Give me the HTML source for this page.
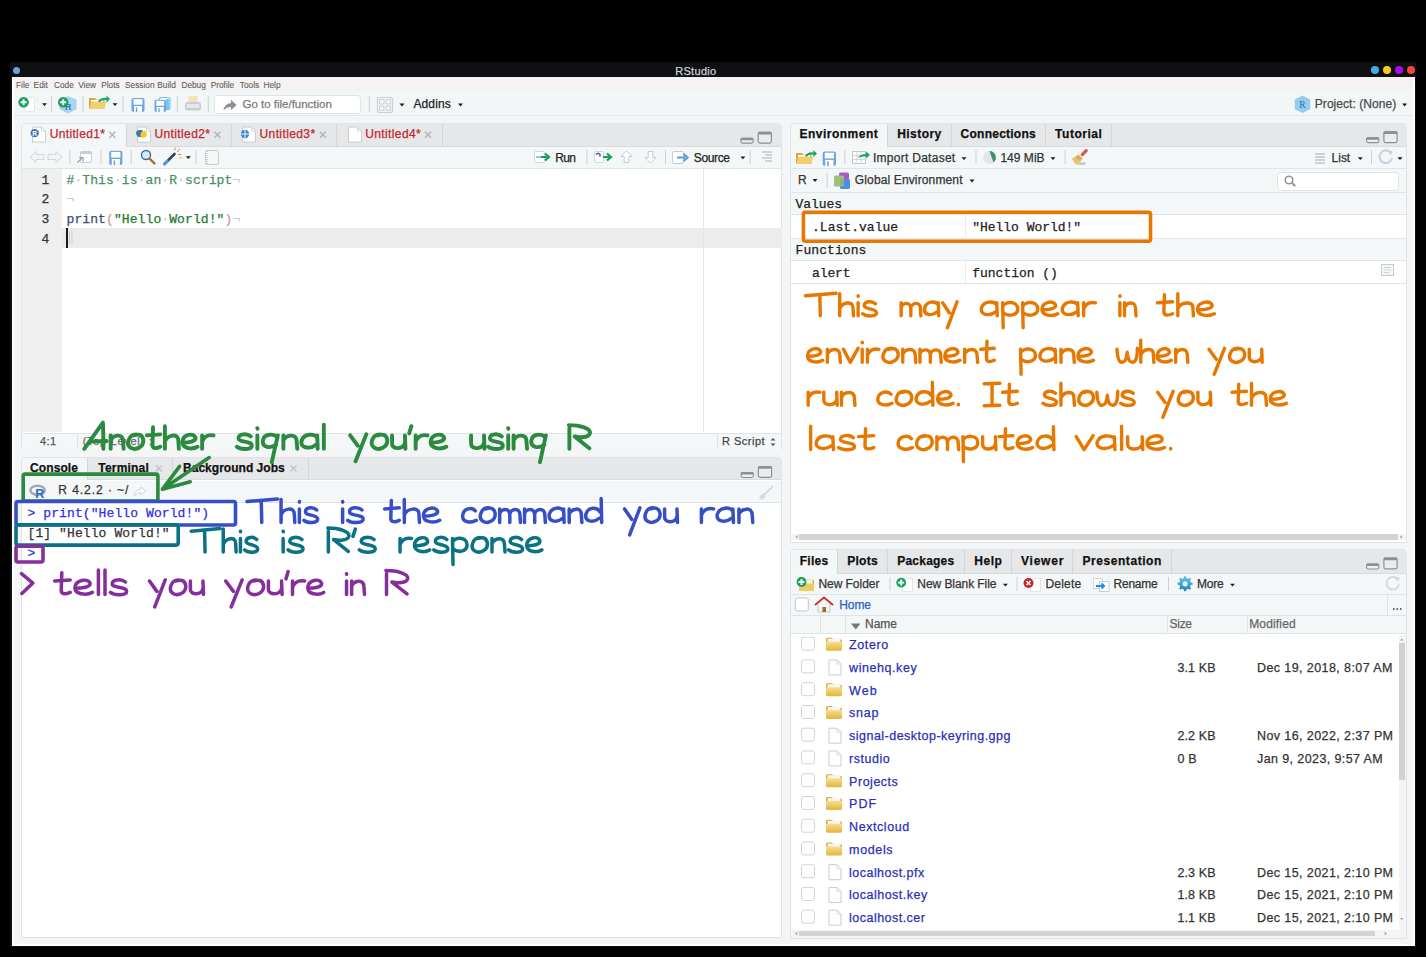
<!DOCTYPE html>
<html><head><meta charset="utf-8">
<style>
*{margin:0;padding:0;box-sizing:border-box}
html,body{width:1426px;height:957px;overflow:hidden;background:#000}
body{position:relative;font-family:"Liberation Sans",sans-serif;font-size:12px;color:#333}
.a{position:absolute}
.t{position:absolute;white-space:nowrap;-webkit-text-stroke:0.25px currentColor}
svg{position:absolute;overflow:visible}
</style></head><body>
<div class="a" style="left:10px;top:62px;width:1406px;height:885px;background:#0e1014;"></div><div class="a" style="left:12px;top:77px;width:1403px;height:869px;background:#ffffff;"></div><div class="a" style="left:14px;top:77px;width:1399px;height:867px;background:#f3f5f7;"></div><div class="a" style="left:14px;top:77px;width:1399px;height:14px;background:#f5f3f1;"></div><div class="a" style="left:14px;top:91px;width:1399px;height:25px;background:#f3f6f7;border-bottom:1px solid #e6e9eb;"></div><div class="a" style="left:13.0px;top:66.7px;width:7.0px;height:7.0px;border-radius:50%;background:#6aa3d8"></div><div class="a" style="left:1371.2px;top:66.2px;width:8px;height:8px;border-radius:50%;background:#49a9e6"></div><div class="a" style="left:1383px;top:66.2px;width:8px;height:8px;border-radius:50%;background:#f7cc12"></div><div class="a" style="left:1395.2px;top:66.2px;width:8px;height:8px;border-radius:50%;background:#a80ce8"></div><div class="a" style="left:1406.9px;top:66.2px;width:8px;height:8px;border-radius:50%;background:#f5413f"></div><div class="a" style="left:20.7px;top:122.5px;width:761.3px;height:327.5px;background:#fff;border:1px solid #e1e4e7;border-radius:4px 4px 0 0;"></div><div class="a" style="left:21.7px;top:123.5px;width:759.3px;height:23px;background:#e6e7e9;border-radius:3px 3px 0 0;border-bottom:1px solid #d9dcdf"></div><div class="a" style="left:21.7px;top:123.5px;width:104.3px;height:24px;background:#f4f7f8;border-radius:3px 0 0 0;"></div><div class="a" style="left:126px;top:123.5px;width:1px;height:23px;background:#d4d6d9"></div><div class="a" style="left:231px;top:123.5px;width:1px;height:23px;background:#d4d6d9"></div><div class="a" style="left:336px;top:123.5px;width:1px;height:23px;background:#d4d6d9"></div><div class="a" style="left:442px;top:123.5px;width:1px;height:23px;background:#d4d6d9"></div><div class="a" style="left:21.7px;top:146.5px;width:759.3px;height:22.2px;background:#f4f7f8;border-bottom:1px solid #e1e4e7"></div><div class="a" style="left:21.7px;top:168.7px;width:40.3px;height:263.3px;background:#efefef;"></div><div class="a" style="left:62px;top:228.3px;width:719.5px;height:19.6px;background:#ececec;"></div><div class="a" style="left:702.8px;top:168.7px;width:1px;height:263.3px;background:#e6e6e6;"></div><div class="a" style="left:21.7px;top:432.5px;width:759.3px;height:17px;background:#f4f7f8;border-top:1px solid #e1e4e7"></div><div class="a" style="left:76.5px;top:433px;width:1px;height:16px;background:#dfe2e5;"></div><div class="a" style="left:716.5px;top:433px;width:1px;height:16px;background:#dfe2e5;"></div><div class="a" style="left:66.3px;top:228.3px;width:2px;height:19.6px;background:#1a1a1a;"></div><div class="a" style="left:20.7px;top:456.8px;width:761.3px;height:481.7px;background:#fff;border:1px solid #e1e4e7;border-radius:4px 4px 0 0;"></div><div class="a" style="left:21.7px;top:457.8px;width:759.3px;height:22.7px;background:#e6e7e9;border-radius:3px 3px 0 0;border-bottom:1px solid #d9dcdf"></div><div class="a" style="left:21.7px;top:457.8px;width:65.6px;height:23.7px;background:#f4f7f8;border-radius:3px 0 0 0;"></div><div class="a" style="left:87.3px;top:457.8px;width:1px;height:22.7px;background:#d4d6d9"></div><div class="a" style="left:172px;top:457.8px;width:1px;height:22.7px;background:#d4d6d9"></div><div class="a" style="left:307.8px;top:457.8px;width:1px;height:22.7px;background:#d4d6d9"></div><div class="a" style="left:21.7px;top:480.5px;width:759.3px;height:22.1px;background:#f4f7f8;border-bottom:1px solid #e1e4e7"></div><div class="a" style="left:790px;top:122.5px;width:617px;height:420.5px;background:#fff;border:1px solid #e1e4e7;border-radius:4px 4px 0 0;"></div><div class="a" style="left:791px;top:123.5px;width:615px;height:23px;background:#e6e7e9;border-radius:3px 3px 0 0;border-bottom:1px solid #d9dcdf"></div><div class="a" style="left:791px;top:123.5px;width:96px;height:24px;background:#f4f7f8;border-radius:3px 0 0 0;"></div><div class="a" style="left:887px;top:123.5px;width:1px;height:23px;background:#d4d6d9"></div><div class="a" style="left:951px;top:123.5px;width:1px;height:23px;background:#d4d6d9"></div><div class="a" style="left:1044.6px;top:123.5px;width:1px;height:23px;background:#d4d6d9"></div><div class="a" style="left:1111px;top:123.5px;width:1px;height:23px;background:#d4d6d9"></div><div class="a" style="left:791px;top:146.5px;width:615px;height:22.7px;background:#f4f7f8;border-bottom:1px solid #e1e4e7"></div><div class="a" style="left:791px;top:169.2px;width:615px;height:23.8px;background:#f4f7f8;border-bottom:1px solid #e1e4e7"></div><div class="a" style="left:791px;top:193px;width:615px;height:22.1px;background:#f4f7f8;border-bottom:1px solid #e1e4e7"></div><div class="a" style="left:791px;top:215.1px;width:615px;height:23.5px;background:#fff;border-bottom:1px solid #e6e8eb"></div><div class="a" style="left:791px;top:238.6px;width:615px;height:22.3px;background:#f4f7f8;border-bottom:1px solid #e1e4e7"></div><div class="a" style="left:791px;top:260.9px;width:615px;height:22.9px;background:#fff;border-bottom:1px solid #e1e4e7"></div><div class="a" style="left:965px;top:215.1px;width:1px;height:23px;background:#e9ebee;"></div><div class="a" style="left:965px;top:260.9px;width:1px;height:23px;background:#e9ebee;"></div><div class="a" style="left:791px;top:533.7px;width:615px;height:6.5px;background:#f4f4f4;"></div><div class="a" style="left:799px;top:534.2px;width:599px;height:5.5px;background:#d3d3d3;"></div><div class="a" style="left:790px;top:549px;width:617px;height:389.5px;background:#fff;border:1px solid #e1e4e7;border-radius:4px 4px 0 0;"></div><div class="a" style="left:791px;top:550px;width:615px;height:23.5px;background:#e6e7e9;border-radius:3px 3px 0 0;border-bottom:1px solid #d9dcdf"></div><div class="a" style="left:791px;top:550px;width:46.4px;height:24.5px;background:#f4f7f8;border-radius:3px 0 0 0;"></div><div class="a" style="left:837.4px;top:550px;width:1px;height:23.5px;background:#d4d6d9"></div><div class="a" style="left:887px;top:550px;width:1px;height:23.5px;background:#d4d6d9"></div><div class="a" style="left:964px;top:550px;width:1px;height:23.5px;background:#d4d6d9"></div><div class="a" style="left:1010.8px;top:550px;width:1px;height:23.5px;background:#d4d6d9"></div><div class="a" style="left:1072px;top:550px;width:1px;height:23.5px;background:#d4d6d9"></div><div class="a" style="left:1170.7px;top:550px;width:1px;height:23.5px;background:#d4d6d9"></div><div class="a" style="left:791px;top:573.5px;width:615px;height:21.3px;background:#f4f7f8;border-bottom:1px solid #e1e4e7"></div><div class="a" style="left:791px;top:594.8px;width:615px;height:21px;background:#f4f7f8;border-bottom:1px solid #e1e4e7"></div><div class="a" style="left:1386.5px;top:594.8px;width:1px;height:21px;background:#dfe2e5;"></div><div class="a" style="left:791px;top:615.8px;width:615px;height:18.2px;background:#f4f7f8;border-bottom:1px solid #e1e4e7"></div><div class="a" style="left:819.7px;top:615.8px;width:1px;height:18.2px;background:#e1e4e7;"></div><div class="a" style="left:845.3px;top:615.8px;width:1px;height:18.2px;background:#e1e4e7;"></div><div class="a" style="left:1167.3px;top:615.8px;width:1px;height:18.2px;background:#e1e4e7;"></div><div class="a" style="left:1247px;top:615.8px;width:1px;height:18.2px;background:#e1e4e7;"></div><div class="a" style="left:1398.5px;top:635px;width:7px;height:298px;background:#f4f4f4;"></div><div class="a" style="left:1399px;top:643px;width:5.8px;height:137px;background:#d2d2d2;"></div><div class="a" style="left:791px;top:929.5px;width:615px;height:8.5px;background:#f4f4f4;"></div><div class="a" style="left:799px;top:931px;width:576px;height:5px;background:#d3d3d3;"></div><svg style="left:0;top:0" width="1426" height="957" viewBox="0 0 1426 957"><rect x="24.5" y="97.5" width="10" height="14" rx="1" fill="#fff" stroke="#e4e6e8"/><circle cx="23.6" cy="102.2" r="5.2" fill="#16a05a"/><path d="M20.6 102.2h6M23.6 99.2v6" stroke="#fff" stroke-width="1.9"/><path d="M42.0 103.3h5l-2.5 2.8z" fill="#1e1e1e"/><rect x="51" y="96" width="1" height="16" fill="#cdd1d5"/><path d="M68 96.5l8 3.5v9l-8 4-8-4v-9z" fill="#a9d6f0" stroke="#8cc4e6" stroke-width="0.6"/><text x="65" y="109.5" font-size="9" font-weight="bold" fill="#3573c0" font-family="Liberation Sans">R</text><circle cx="63.2" cy="102.2" r="5.2" fill="#16a05a"/><path d="M60.2 102.2h6M63.2 99.2v6" stroke="#fff" stroke-width="1.9"/><rect x="82.4" y="96" width="1" height="16" fill="#cdd1d5"/><g transform="translate(89 95) scale(1.0)"><path d="M0 3h6l1.5 1.5h8v9.5h-15.5z" fill="#d9a93a"/><path d="M2 5h12v7h-12z" fill="#fff"/><path d="M0 14l2.5-7.5h15l-2.5 7.5z" fill="#f1cf6e"/></g><path d="M98 101.5q3-4.5 8.5-3.5v-2.5l3.5 3.5-3.5 3.5v-2.3q-4.5-.5-7 2z" fill="#19a56b"/><path d="M112.5 103.3h5l-2.5 2.8z" fill="#1e1e1e"/><rect x="122.5" y="96" width="1" height="16" fill="#cdd1d5"/><g transform="translate(131.5 97.9) scale(1.0)"><rect x="0" y="0" width="13" height="14" rx="2" fill="#6fa5de"/><rect x="2" y="1.2" width="9" height="5.6" fill="#fff"/><rect x="2.5" y="8.2" width="8" height="5.8" fill="#fff"/><rect x="4.3" y="9.6" width="1.6" height="4.4" fill="#6fa5de"/></g><rect x="159.5" y="97.5" width="10.5" height="12" rx="1.5" fill="#fff" stroke="#6fc3ea" stroke-width="1.2"/><rect x="166" y="99" width="3" height="10" fill="#73c8ee"/><g transform="translate(154.5 99.7) scale(0.8846153846153846)"><rect x="0" y="0" width="13" height="14" rx="2" fill="#6fa5de"/><rect x="2" y="1.2" width="9" height="5.6" fill="#fff"/><rect x="2.5" y="8.2" width="8" height="5.8" fill="#fff"/><rect x="4.3" y="9.6" width="1.6" height="4.4" fill="#6fa5de"/></g><rect x="176.7" y="96" width="1" height="16" fill="#cdd1d5"/><rect x="188.5" y="96" width="9" height="7" fill="#f2e3b8"/><rect x="185" y="102" width="16" height="8.5" rx="2.5" fill="#c8cdd4"/><rect x="186.5" y="104" width="13" height="4" fill="#e4e7eb"/><rect x="207.8" y="96" width="1" height="16" fill="#cdd1d5"/><rect x="214.5" y="95.5" width="146" height="18" rx="3" fill="#fff" stroke="#e1e4e7"/><path d="M223.5 110.5q.5-6.5 7.5-7.5v-3.2l5.5 5.2-5.5 5.3v-3.3q-4.5-.2-7.5 3.5z" fill="#8b9199"/><rect x="368.7" y="96" width="1" height="16" fill="#cdd1d5"/><rect x="377.5" y="97.5" width="15" height="15" rx="2" fill="none" stroke="#cbd0d5" stroke-width="1.2"/><path d="M379.5 99.5h4.5v4.5h-4.5zM386 99.5h4.5v4.5h-4.5zM379.5 106h4.5v4.5h-4.5zM386 106h4.5v4.5h-4.5z" fill="none" stroke="#cbd0d5"/><path d="M399.5 103.6h5l-2.5 2.8z" fill="#1e1e1e"/><path d="M458.0 103.6h5l-2.5 2.8z" fill="#1e1e1e"/><path d="M1302.5 96l7.3 3.7v9.2l-7.3 3.7-7.3-3.7v-9.2z" fill="#96cdec" stroke="#7fbde3" stroke-width="0.6"/><text x="1299.3" y="108" font-size="9.5" fill="#2a6db2" font-family="Liberation Serif">R</text><path d="M1402.1 103.6h5l-2.5 2.8z" fill="#1e1e1e"/><path d="M32.5 127.1h9l4 4v11h-13z" fill="#fff" stroke="#c9cbce" stroke-width="1"/><path d="M41.5 127.1v4h4" fill="none" stroke="#d8d9db" stroke-width="1"/><circle cx="34.7" cy="133.1" r="4.2" fill="#3f75b6"/><text x="32.3" y="135.9" font-size="6.5" fill="#fff" font-family="Liberation Sans" font-weight="bold">R</text><path d="M137.5 127.1h9l4 4v11h-13z" fill="#fff" stroke="#c9cbce" stroke-width="1"/><path d="M146.5 127.1v4h4" fill="none" stroke="#d8d9db" stroke-width="1"/><path d="M136 134q0-4 3.5-4h3v2h-3q-1.5 0-1.5 2z" fill="#3d75b0"/><path d="M143.5 130.5q3 0 3 3.5t-3.5 3.5h-3v-2h3q1.5 0 1.5-1.5z" fill="#f2c72a"/><circle cx="139.5" cy="134" r="3" fill="#3d75b0"/><circle cx="143.5" cy="134.5" r="3" fill="#f2c72a"/><path d="M242.5 127.1h9l4 4v11h-13z" fill="#fff" stroke="#c9cbce" stroke-width="1"/><path d="M251.5 127.1v4h4" fill="none" stroke="#d8d9db" stroke-width="1"/><circle cx="245" cy="134" r="4.2" fill="#3c86d8"/><path d="M240.8 134h8.4M245 129.8v8.4" stroke="#fff" stroke-width="0.9"/><path d="M348.5 127.1h9l4 4v11h-13z" fill="#fff" stroke="#c9cbce" stroke-width="1"/><path d="M357.5 127.1v4h4" fill="none" stroke="#d8d9db" stroke-width="1"/><path d="M109.3 131.8l6.0 6.0M115.3 131.8l-6.0 6.0" stroke="#b3b6ba" stroke-width="1.6"/><path d="M214.4 131.8l6.0 6.0M220.4 131.8l-6.0 6.0" stroke="#b3b6ba" stroke-width="1.6"/><path d="M319.9 131.8l6.0 6.0M325.9 131.8l-6.0 6.0" stroke="#b3b6ba" stroke-width="1.6"/><path d="M425.1 131.8l6.0 6.0M431.1 131.8l-6.0 6.0" stroke="#b3b6ba" stroke-width="1.6"/><rect x="740.8499999999999" y="138.25" width="12.3" height="4.9" rx="1.6" fill="#eeeff0" stroke="#8a9097" stroke-width="1.1"/><rect x="740.8" y="137.7" width="12.4" height="2.6" rx="1" fill="#8a9097"/><rect x="758.1999999999999" y="132.29999999999998" width="13.2" height="10.8" rx="1.8" fill="#ebecee" stroke="#8a9097" stroke-width="1.2"/><rect x="757.9" y="131.7" width="13.8" height="2.8" rx="1.2" fill="#8a9097"/><path d="M30 157l6-5.5v3h8v5h-8v3z" fill="#f3f4f5" stroke="#d3d6d9"/><path d="M62 157l-6-5.5v3h-8v5h8v3z" fill="#f3f4f5" stroke="#d3d6d9"/><rect x="69.3" y="150" width="1" height="14" fill="#cdd1d5"/><rect x="80.5" y="151.5" width="11" height="11" rx="1.5" fill="#fff" stroke="#c8ccd0"/><rect x="80.5" y="151.5" width="11" height="2.5" fill="#c8ccd0"/><path d="M77.5 162.5l5-5M79 157.5h4v4" stroke="#9aa0a6" stroke-width="1.2" fill="none"/><rect x="100.5" y="150" width="1" height="14" fill="#cdd1d5"/><g transform="translate(109.2 150.7) scale(1.0153846153846153)"><rect x="0" y="0" width="13" height="14" rx="2" fill="#6fa5de"/><rect x="2" y="1.2" width="9" height="5.6" fill="#fff"/><rect x="2.5" y="8.2" width="8" height="5.8" fill="#fff"/><rect x="4.3" y="9.6" width="1.6" height="4.4" fill="#6fa5de"/></g><rect x="130.7" y="150" width="1" height="14" fill="#cdd1d5"/><circle cx="146" cy="155" r="4.5" fill="#d6e9f8" stroke="#3a6ea8" stroke-width="1.4"/><path d="M149.5 158.5l5 5" stroke="#a76b2e" stroke-width="2.4" stroke-linecap="round"/><path d="M164.5 164l10-10" stroke="#3b4450" stroke-width="2.6" stroke-linecap="round"/><path d="M164.5 164l3-3" stroke="#4a9be0" stroke-width="2.6" stroke-linecap="round"/><path d="M177 152l3-3M178 154.5h3.5M175 150.5v-3M179.5 157l2 1.5" stroke="#f08a3c" stroke-width="1"/><path d="M185.8 156.3h5l-2.5 2.8z" fill="#1e1e1e"/><rect x="195.5" y="150" width="1" height="14" fill="#cdd1d5"/><rect x="205.5" y="150.5" width="13" height="14" rx="1.5" fill="#f6f6f7" stroke="#c9ccd0"/><path d="M207 151v13" stroke="#aab" stroke-width="1" stroke-dasharray="1 1"/><rect x="534.5" y="151.5" width="10" height="11" rx="1.5" fill="#fff" stroke="#d4d7da"/><path d="M536 157h5" stroke="#9ec3ef" stroke-width="2"/><path d="M541 157h6M545 153.5l4 3.5-4 3.5" stroke="#14a05c" stroke-width="2.2" fill="none"/><rect x="586.4" y="150" width="1" height="14" fill="#cdd1d5"/><rect x="594.5" y="151.5" width="9" height="11" rx="1.5" fill="#fff" stroke="#d4d7da"/><path d="M596 154.5q2-2.5 4 0v2" stroke="#2364c8" stroke-width="1.5" fill="none"/><path d="M603 157h6M607 153.5l4 3.5-4 3.5" stroke="#14a05c" stroke-width="2.2" fill="none"/><path d="M626.5 151l5.5 5.5h-3.2v6h-4.6v-6h-3.2z" fill="#fff" stroke="#c6cacf"/><path d="M650.5 163l5.5-5.5h-3.2v-6h-4.6v6h-3.2z" fill="#fff" stroke="#c6cacf"/><rect x="665" y="150" width="1" height="14" fill="#cdd1d5"/><rect x="672.5" y="151.5" width="11" height="12" rx="1.5" fill="#fff" stroke="#c6cacf"/><path d="M677 157.5h8M683.5 154l4 3.5-4 3.5" stroke="#5b9bd8" stroke-width="2.2" fill="none"/><path d="M740.4 156.4h5l-2.5 2.8z" fill="#1e1e1e"/><rect x="749.7" y="150" width="1" height="14" fill="#cdd1d5"/><path d="M762 152h10M765 155h7M762 158h10M765 161h7" stroke="#aab0b6" stroke-width="1"/><path d="M69.5 232v12M72 232v12M69.5 232h4" stroke="#cfcfcf" stroke-width="1"/><path d="M770.5 440.5l2.5-2.5 2.5 2.5zM770.5 443.5l2.5 2.5 2.5-2.5z" fill="#555"/><rect x="741.05" y="472.55" width="12.3" height="4.9" rx="1.6" fill="#eeeff0" stroke="#8a9097" stroke-width="1.1"/><rect x="741.0" y="472" width="12.4" height="2.6" rx="1" fill="#8a9097"/><rect x="758.4" y="466.6" width="13.2" height="10.8" rx="1.8" fill="#ebecee" stroke="#8a9097" stroke-width="1.2"/><rect x="758.1" y="466" width="13.8" height="2.8" rx="1.2" fill="#8a9097"/><path d="M155.9 465.5l6 6M161.9 465.5l-6 6" stroke="#c0c3c6" stroke-width="1.3"/><path d="M290.5 465.5l6 6M296.5 465.5l-6 6" stroke="#c0c3c6" stroke-width="1.3"/><ellipse cx="37.6" cy="490.3" rx="7.2" ry="4.6" fill="none" stroke="#a2a7ac" stroke-width="2.4"/><text x="35.2" y="497.8" font-size="12.5" font-weight="bold" fill="#2b6cc4" font-family="Liberation Sans">R</text><path d="M134 496q1-6 7-6.5v-2.5l4.5 4-4.5 4v-2.5q-4 0-7 3.5z" fill="#fff" stroke="#d3d7db" stroke-width="1"/><path d="M761 498l12-12" stroke="#d0d4d8" stroke-width="1.6"/><path d="M759 497l4-4 3 3-4 4z" fill="#d6dade"/><rect x="1366.55" y="137.75" width="12.3" height="4.9" rx="1.6" fill="#eeeff0" stroke="#8a9097" stroke-width="1.1"/><rect x="1366.5" y="137.2" width="12.4" height="2.6" rx="1" fill="#8a9097"/><rect x="1383.9" y="131.79999999999998" width="13.2" height="10.8" rx="1.8" fill="#ebecee" stroke="#8a9097" stroke-width="1.2"/><rect x="1383.6" y="131.2" width="13.8" height="2.8" rx="1.2" fill="#8a9097"/><g transform="translate(796 150) scale(1.0)"><path d="M0 3h6l1.5 1.5h8v9.5h-15.5z" fill="#d9a93a"/><path d="M2 5h12v7h-12z" fill="#fff"/><path d="M0 14l2.5-7.5h15l-2.5 7.5z" fill="#f1cf6e"/></g><path d="M805 156q3-4.5 8.5-3.5v-2.5l3.5 3.5-3.5 3.5v-2.3q-4.5-.5-7 2z" fill="#19a56b"/><g transform="translate(822.7 151.5) scale(1.0230769230769232)"><rect x="0" y="0" width="13" height="14" rx="2" fill="#6fa5de"/><rect x="2" y="1.2" width="9" height="5.6" fill="#fff"/><rect x="2.5" y="8.2" width="8" height="5.8" fill="#fff"/><rect x="4.3" y="9.6" width="1.6" height="4.4" fill="#6fa5de"/></g><rect x="844.3" y="150" width="1" height="14" fill="#cdd1d5"/><rect x="852.5" y="151.5" width="13" height="12" fill="#fff" stroke="#c5c9ce"/><path d="M852.5 155.5h13M852.5 159.5h13M857 151.5v12M861 151.5v12" stroke="#c5c9ce" stroke-width="0.8"/><path d="M858 158q2-4 8-4v-2.5l4 3.5-4 3.5v-2.3q-4.5 0-8 1.8z" fill="#19a56b"/><path d="M961.5 157.3h5l-2.5 2.8z" fill="#1e1e1e"/><rect x="975.5" y="150" width="1" height="14" fill="#cdd1d5"/><circle cx="989.5" cy="157.5" r="6.5" fill="#e3e6e9"/><path d="M989.5 151a6.5 6.5 0 0 1 4 11.5z" fill="#3f8f6f"/><path d="M1050.5 157.3h5l-2.5 2.8z" fill="#1e1e1e"/><rect x="1064.6" y="150" width="1" height="14" fill="#cdd1d5"/><ellipse cx="1081.5" cy="163.6" rx="4.5" ry="1.3" fill="#aab0b6" opacity="0.7"/><path d="M1086.2 150.6L1082.3 154.6" stroke="#d8544f" stroke-width="3.2" stroke-linecap="round"/><path d="M1071.8 158.8L1078.6 154.4L1083 158.6L1077.4 165q-3.4-1.6-5.6-6.2z" fill="#e3c46c"/><path d="M1077.6 155.6l3.6 3.6M1076.3 156.8l3.6 3.6" stroke="#c39236" stroke-width="1"/><path d="M1315 154h10M1315 157h10M1315 160h10M1315 163h10" stroke="#a8adb2" stroke-width="1.2"/><path d="M1357.8 157.3h5l-2.5 2.8z" fill="#1e1e1e"/><rect x="1371" y="150" width="1" height="14" fill="#cdd1d5"/><path d="M1390.5 152.5a6.3 6.3 0 1 0 1.5 5.5" fill="none" stroke="#c9d3e0" stroke-width="2.2"/><path d="M1388 150l5 1.5-2.5 4z" fill="#c9d3e0"/><path d="M1397.5 157.3h5l-2.5 2.8z" fill="#1e1e1e"/><path d="M812.5 179.10000000000002h5l-2.5 2.8z" fill="#1e1e1e"/><rect x="826.7" y="173" width="1" height="15" fill="#cdd1d5"/><rect x="839" y="172.5" width="10" height="11" rx="1.5" fill="#a75bc8"/><rect x="834" y="175.5" width="10" height="11" rx="1.5" fill="#9fc07a"/><rect x="840" y="179" width="10" height="10" rx="1.5" fill="#4a8fe0"/><rect x="840" y="179" width="4" height="7.5" fill="#8fae8c"/><path d="M969.5 179.60000000000002h5l-2.5 2.8z" fill="#1e1e1e"/><rect x="1277.5" y="172.5" width="121" height="18" rx="3" fill="#fff" stroke="#e0e3e6"/><circle cx="1289" cy="180" r="3.8" fill="none" stroke="#8f959b" stroke-width="1.6"/><path d="M1291.8 182.8l3.5 3.5" stroke="#8f959b" stroke-width="2"/><rect x="1381.5" y="264.5" width="12" height="11" fill="#f4f5f6" stroke="#c8ccd0"/><path d="M1384 267.5h7M1384 270h7M1384 272.5h5" stroke="#c8ccd0" stroke-width="0.8"/><path d="M795.5 537l2-1.8v3.6z" fill="#999"/><path d="M1402.5 537l-2-1.8v3.6z" fill="#999"/><rect x="1366.55" y="564.05" width="12.3" height="4.9" rx="1.6" fill="#eeeff0" stroke="#8a9097" stroke-width="1.1"/><rect x="1366.5" y="563.5" width="12.4" height="2.6" rx="1" fill="#8a9097"/><rect x="1383.9" y="558.1" width="13.2" height="10.8" rx="1.8" fill="#ebecee" stroke="#8a9097" stroke-width="1.2"/><rect x="1383.6" y="557.5" width="13.8" height="2.8" rx="1.2" fill="#8a9097"/><path d="M799 579.5q0-1.5 1.5-1.5h4l1.5 1.5h6.5q1.5 0 1.5 1.5v9.5h-15z" fill="#d9ae45"/><rect x="801.5" y="579.5" width="11" height="6" fill="#f4f4f4"/><path d="M799 583.5h15v6q0 1.5-1.5 1.5h-12q-1.5 0-1.5-1.5z" fill="#f0cc63"/><circle cx="801.5" cy="582" r="4.9" fill="#16a05a"/><path d="M798.5 582h6M801.5 579v6" stroke="#fff" stroke-width="1.9"/><rect x="889.6" y="577" width="1" height="14" fill="#cdd1d5"/><rect x="902.5" y="578.5" width="10" height="13" fill="#fff" stroke="#e3e5e7"/><circle cx="901.2" cy="582.6" r="4.9" fill="#16a05a"/><path d="M898.2 582.6h6M901.2 579.6v6" stroke="#fff" stroke-width="1.9"/><path d="M1002.9 583.8h5l-2.5 2.8z" fill="#1e1e1e"/><rect x="1016.5" y="577" width="1" height="14" fill="#cdd1d5"/><rect x="1030.5" y="578.5" width="10" height="13" fill="#fff" stroke="#e3e5e7"/><circle cx="1028.5" cy="583" r="5" fill="#c8262d"/><path d="M1026.5 581l4 4M1030.5 581l-4 4" stroke="#fff" stroke-width="1.6"/><rect x="1093.5" y="578.5" width="9" height="10" fill="#fff" stroke="#d3d6da"/><rect x="1099.5" y="581.5" width="9.5" height="10" fill="#fff" stroke="#c8ccd0"/><path d="M1096 586h7.5M1101.5 583.3l2.7 2.7-2.7 2.7" stroke="#1c8fe0" stroke-width="1.8" fill="none"/><rect x="1168" y="577" width="1" height="14" fill="#cdd1d5"/><defs><linearGradient id="gg" x1="0" y1="0" x2="0" y2="1"><stop offset="0" stop-color="#5cc0e8"/><stop offset="1" stop-color="#2a86b8"/></linearGradient></defs><path d="M1190.57 582.58 L1192.64 582.81 L1192.64 584.79 L1190.57 585.02 L1189.83 586.80 L1191.13 588.43 L1189.73 589.83 L1188.10 588.53 L1186.32 589.27 L1186.09 591.34 L1184.11 591.34 L1183.88 589.27 L1182.10 588.53 L1180.47 589.83 L1179.07 588.43 L1180.37 586.80 L1179.63 585.02 L1177.56 584.79 L1177.56 582.81 L1179.63 582.58 L1180.37 580.80 L1179.07 579.17 L1180.47 577.77 L1182.10 579.07 L1183.88 578.33 L1184.11 576.26 L1186.09 576.26 L1186.32 578.33 L1188.10 579.07 L1189.73 577.77 L1191.13 579.17 L1189.83 580.80z" fill="url(#gg)"/><circle cx="1185.1" cy="583.8" r="5.8" fill="url(#gg)"/><circle cx="1185.1" cy="583.8" r="2.6" fill="#dff1fa"/><path d="M1230.0 583.8h5l-2.5 2.8z" fill="#1e1e1e"/><path d="M1397.5 579a6.3 6.3 0 1 0 1.5 5.5" fill="none" stroke="#d2dbe5" stroke-width="2"/><path d="M1395 576.5l5 1.5-2.5 4z" fill="#d2dbe5"/><rect x="795.3" y="598" width="13" height="13" rx="2" fill="#fff" stroke="#c4c7cb"/><path d="M815 605l9-7.5 9 7.5" fill="none" stroke="#c9302c" stroke-width="1.8"/><path d="M818 604v8h12v-8l-6-5z" fill="#f5f5f5" stroke="#b9b9b9" stroke-width="0.8"/><rect x="822.5" y="607" width="3.5" height="5" fill="#a06a32"/><path d="M1393 609h1.5M1396.5 609h1.5M1400 609h1.5" stroke="#333" stroke-width="1.6"/><path d="M851 623.5h9.5l-4.75 6z" fill="#777"/><defs><linearGradient id="fg" x1="0" y1="0" x2="0" y2="1"><stop offset="0" stop-color="#f7df8e"/><stop offset="1" stop-color="#e3b53f"/></linearGradient></defs><rect x="801.5" y="637.20" width="13" height="13" rx="2.5" fill="#fff" stroke="#d0d3d6"/><path d="M826 639.2q0-1.5 1.5-1.5h4.5l1.5 1.5h7q1.5 0 1.5 1.5v2h-16z" fill="#d4a63c"/><path d="M827.5 638.7h13v5h-13z" fill="#f5f5f2"/><path d="M826 641.7h16v7.5q0 1.5-1.5 1.5h-13q-1.5 0-1.5-1.5z" fill="url(#fg)"/><rect x="801.5" y="659.95" width="13" height="13" rx="2.5" fill="#fff" stroke="#d0d3d6"/><path d="M829.0 659.95h8l4 4v11h-12z" fill="#fff" stroke="#c9cbce" stroke-width="1"/><path d="M837.0 659.95v4h4" fill="none" stroke="#d8d9db" stroke-width="1"/><rect x="801.5" y="682.70" width="13" height="13" rx="2.5" fill="#fff" stroke="#d0d3d6"/><path d="M826 684.7q0-1.5 1.5-1.5h4.5l1.5 1.5h7q1.5 0 1.5 1.5v2h-16z" fill="#d4a63c"/><path d="M827.5 684.2h13v5h-13z" fill="#f5f5f2"/><path d="M826 687.2h16v7.5q0 1.5-1.5 1.5h-13q-1.5 0-1.5-1.5z" fill="url(#fg)"/><rect x="801.5" y="705.45" width="13" height="13" rx="2.5" fill="#fff" stroke="#d0d3d6"/><path d="M826 707.45q0-1.5 1.5-1.5h4.5l1.5 1.5h7q1.5 0 1.5 1.5v2h-16z" fill="#d4a63c"/><path d="M827.5 706.95h13v5h-13z" fill="#f5f5f2"/><path d="M826 709.95h16v7.5q0 1.5-1.5 1.5h-13q-1.5 0-1.5-1.5z" fill="url(#fg)"/><rect x="801.5" y="728.20" width="13" height="13" rx="2.5" fill="#fff" stroke="#d0d3d6"/><path d="M829.0 728.2h8l4 4v11h-12z" fill="#fff" stroke="#c9cbce" stroke-width="1"/><path d="M837.0 728.2v4h4" fill="none" stroke="#d8d9db" stroke-width="1"/><rect x="801.5" y="750.95" width="13" height="13" rx="2.5" fill="#fff" stroke="#d0d3d6"/><path d="M829.0 750.95h8l4 4v11h-12z" fill="#fff" stroke="#c9cbce" stroke-width="1"/><path d="M837.0 750.95v4h4" fill="none" stroke="#d8d9db" stroke-width="1"/><rect x="801.5" y="773.70" width="13" height="13" rx="2.5" fill="#fff" stroke="#d0d3d6"/><path d="M826 775.7q0-1.5 1.5-1.5h4.5l1.5 1.5h7q1.5 0 1.5 1.5v2h-16z" fill="#d4a63c"/><path d="M827.5 775.2h13v5h-13z" fill="#f5f5f2"/><path d="M826 778.2h16v7.5q0 1.5-1.5 1.5h-13q-1.5 0-1.5-1.5z" fill="url(#fg)"/><rect x="801.5" y="796.45" width="13" height="13" rx="2.5" fill="#fff" stroke="#d0d3d6"/><path d="M826 798.45q0-1.5 1.5-1.5h4.5l1.5 1.5h7q1.5 0 1.5 1.5v2h-16z" fill="#d4a63c"/><path d="M827.5 797.95h13v5h-13z" fill="#f5f5f2"/><path d="M826 800.95h16v7.5q0 1.5-1.5 1.5h-13q-1.5 0-1.5-1.5z" fill="url(#fg)"/><rect x="801.5" y="819.20" width="13" height="13" rx="2.5" fill="#fff" stroke="#d0d3d6"/><path d="M826 821.2q0-1.5 1.5-1.5h4.5l1.5 1.5h7q1.5 0 1.5 1.5v2h-16z" fill="#d4a63c"/><path d="M827.5 820.7h13v5h-13z" fill="#f5f5f2"/><path d="M826 823.7h16v7.5q0 1.5-1.5 1.5h-13q-1.5 0-1.5-1.5z" fill="url(#fg)"/><rect x="801.5" y="841.95" width="13" height="13" rx="2.5" fill="#fff" stroke="#d0d3d6"/><path d="M826 843.95q0-1.5 1.5-1.5h4.5l1.5 1.5h7q1.5 0 1.5 1.5v2h-16z" fill="#d4a63c"/><path d="M827.5 843.45h13v5h-13z" fill="#f5f5f2"/><path d="M826 846.45h16v7.5q0 1.5-1.5 1.5h-13q-1.5 0-1.5-1.5z" fill="url(#fg)"/><rect x="801.5" y="864.70" width="13" height="13" rx="2.5" fill="#fff" stroke="#d0d3d6"/><path d="M829.0 864.7h8l4 4v11h-12z" fill="#fff" stroke="#c9cbce" stroke-width="1"/><path d="M837.0 864.7v4h4" fill="none" stroke="#d8d9db" stroke-width="1"/><rect x="801.5" y="887.45" width="13" height="13" rx="2.5" fill="#fff" stroke="#d0d3d6"/><path d="M829.0 887.45h8l4 4v11h-12z" fill="#fff" stroke="#c9cbce" stroke-width="1"/><path d="M837.0 887.45v4h4" fill="none" stroke="#d8d9db" stroke-width="1"/><rect x="801.5" y="910.20" width="13" height="13" rx="2.5" fill="#fff" stroke="#d0d3d6"/><path d="M829.0 910.2h8l4 4v11h-12z" fill="#fff" stroke="#c9cbce" stroke-width="1"/><path d="M837.0 910.2v4h4" fill="none" stroke="#d8d9db" stroke-width="1"/><path d="M1401.8 638.5l-2 2h4z" fill="#aaa"/><path d="M1401.8 920l-2-2h4z" fill="#aaa"/><path d="M795 933.5l2.3-2v4z" fill="#aaa"/><path d="M1387 933.5l-2.3-2v4z" fill="#aaa"/></svg>
<div class="t" style="left:675.2px;top:65.89px;font-size:11px;line-height:11px;color:#cdd1d6;letter-spacing:0.311px;">RStudio</div>
<div class="t" style="left:16.0px;top:80.97px;font-size:8.3px;line-height:8.3px;color:#5e5e5e;-webkit-text-stroke:0.1px currentColor;">File</div>
<div class="t" style="left:33.6px;top:80.97px;font-size:8.3px;line-height:8.3px;color:#5e5e5e;-webkit-text-stroke:0.1px currentColor;">Edit</div>
<div class="t" style="left:54.0px;top:80.97px;font-size:8.3px;line-height:8.3px;color:#5e5e5e;-webkit-text-stroke:0.1px currentColor;">Code</div>
<div class="t" style="left:78.2px;top:80.97px;font-size:8.3px;line-height:8.3px;color:#5e5e5e;-webkit-text-stroke:0.1px currentColor;">View</div>
<div class="t" style="left:101.2px;top:80.97px;font-size:8.3px;line-height:8.3px;color:#5e5e5e;-webkit-text-stroke:0.1px currentColor;">Plots</div>
<div class="t" style="left:125.0px;top:80.97px;font-size:8.3px;line-height:8.3px;color:#5e5e5e;-webkit-text-stroke:0.1px currentColor;">Session</div>
<div class="t" style="left:157.3px;top:80.97px;font-size:8.3px;line-height:8.3px;color:#5e5e5e;-webkit-text-stroke:0.1px currentColor;">Build</div>
<div class="t" style="left:181.4px;top:80.97px;font-size:8.3px;line-height:8.3px;color:#5e5e5e;-webkit-text-stroke:0.1px currentColor;">Debug</div>
<div class="t" style="left:210.7px;top:80.97px;font-size:8.3px;line-height:8.3px;color:#5e5e5e;-webkit-text-stroke:0.1px currentColor;">Profile</div>
<div class="t" style="left:239.8px;top:80.97px;font-size:8.3px;line-height:8.3px;color:#5e5e5e;-webkit-text-stroke:0.1px currentColor;">Tools</div>
<div class="t" style="left:263.5px;top:80.97px;font-size:8.3px;line-height:8.3px;color:#5e5e5e;-webkit-text-stroke:0.1px currentColor;">Help</div>
<div class="t" style="left:242.6px;top:99.27px;font-size:11.5px;line-height:11.5px;color:#777b80;letter-spacing:-0.016px;">Go to file/function</div>
<div class="t" style="left:413.4px;top:98.14px;font-size:12px;line-height:12px;color:#222;letter-spacing:0.142px;">Addins</div>
<div class="t" style="left:1314.8px;top:98.34px;font-size:12px;line-height:12px;color:#4a4a4a;letter-spacing:0.050px;">Project: (None)</div>
<div class="t" style="left:49.7px;top:127.74px;font-size:12px;line-height:12px;color:#c0282b;letter-spacing:0.352px;">Untitled1*</div>
<div class="t" style="left:154.4px;top:127.74px;font-size:12px;line-height:12px;color:#c0282b;letter-spacing:0.397px;">Untitled2*</div>
<div class="t" style="left:259.5px;top:127.74px;font-size:12px;line-height:12px;color:#c0282b;letter-spacing:0.397px;">Untitled3*</div>
<div class="t" style="left:365.2px;top:127.74px;font-size:12px;line-height:12px;color:#c0282b;letter-spacing:0.385px;">Untitled4*</div>
<div class="t" style="left:555.3px;top:151.54px;font-size:12px;line-height:12px;color:#222;letter-spacing:-0.657px;">Run</div>
<div class="t" style="left:693.8px;top:151.54px;font-size:12px;line-height:12px;color:#222;letter-spacing:-0.364px;">Source</div>
<div class="t" style="left:41.6px;top:173.54px;font-size:13px;line-height:13px;color:#333;font-family:'Liberation Mono',monospace;">1</div>
<div class="t" style="left:41.6px;top:193.24px;font-size:13px;line-height:13px;color:#333;font-family:'Liberation Mono',monospace;">2</div>
<div class="t" style="left:41.6px;top:212.94px;font-size:13px;line-height:13px;color:#333;font-family:'Liberation Mono',monospace;">3</div>
<div class="t" style="left:41.6px;top:232.64px;font-size:13px;line-height:13px;color:#333;font-family:'Liberation Mono',monospace;">4</div>
<div class="t" style="left:66.5px;top:173.54px;font-size:13px;line-height:13px;color:#4a8e64;font-family:'Liberation Mono',monospace;letter-spacing:0.1px;">#</div>
<div class="t" style="left:74.4px;top:173.54px;font-size:13px;line-height:13px;color:#c9c9c9;font-family:'Liberation Mono',monospace;letter-spacing:0.1px;">·</div>
<div class="t" style="left:82.3px;top:173.54px;font-size:13px;line-height:13px;color:#4a8e64;font-family:'Liberation Mono',monospace;letter-spacing:0.1px;">This</div>
<div class="t" style="left:113.9px;top:173.54px;font-size:13px;line-height:13px;color:#c9c9c9;font-family:'Liberation Mono',monospace;letter-spacing:0.1px;">·</div>
<div class="t" style="left:121.8px;top:173.54px;font-size:13px;line-height:13px;color:#4a8e64;font-family:'Liberation Mono',monospace;letter-spacing:0.1px;">is</div>
<div class="t" style="left:137.6px;top:173.54px;font-size:13px;line-height:13px;color:#c9c9c9;font-family:'Liberation Mono',monospace;letter-spacing:0.1px;">·</div>
<div class="t" style="left:145.5px;top:173.54px;font-size:13px;line-height:13px;color:#4a8e64;font-family:'Liberation Mono',monospace;letter-spacing:0.1px;">an</div>
<div class="t" style="left:161.3px;top:173.54px;font-size:13px;line-height:13px;color:#c9c9c9;font-family:'Liberation Mono',monospace;letter-spacing:0.1px;">·</div>
<div class="t" style="left:169.2px;top:173.54px;font-size:13px;line-height:13px;color:#4a8e64;font-family:'Liberation Mono',monospace;letter-spacing:0.1px;">R</div>
<div class="t" style="left:177.1px;top:173.54px;font-size:13px;line-height:13px;color:#c9c9c9;font-family:'Liberation Mono',monospace;letter-spacing:0.1px;">·</div>
<div class="t" style="left:185.0px;top:173.54px;font-size:13px;line-height:13px;color:#4a8e64;font-family:'Liberation Mono',monospace;letter-spacing:0.1px;">script</div>
<div class="t" style="left:232.4px;top:173.54px;font-size:13px;line-height:13px;color:#c9c9c9;font-family:'Liberation Mono',monospace;letter-spacing:0.1px;">¬</div>
<div class="t" style="left:66.5px;top:193.24px;font-size:13px;line-height:13px;color:#c9c9c9;font-family:'Liberation Mono',monospace;letter-spacing:0.1px;">¬</div>
<div class="t" style="left:66.5px;top:212.94px;font-size:13px;line-height:13px;color:#3b4a73;font-family:'Liberation Mono',monospace;letter-spacing:0.1px;">print</div>
<div class="t" style="left:106.0px;top:212.94px;font-size:13px;line-height:13px;color:#e38e9b;font-family:'Liberation Mono',monospace;letter-spacing:0.1px;">(</div>
<div class="t" style="left:113.9px;top:212.94px;font-size:13px;line-height:13px;color:#217a2b;font-family:'Liberation Mono',monospace;letter-spacing:0.1px;">"Hello</div>
<div class="t" style="left:161.3px;top:212.94px;font-size:13px;line-height:13px;color:#c9c9c9;font-family:'Liberation Mono',monospace;letter-spacing:0.1px;">·</div>
<div class="t" style="left:169.2px;top:212.94px;font-size:13px;line-height:13px;color:#217a2b;font-family:'Liberation Mono',monospace;letter-spacing:0.1px;">World!"</div>
<div class="t" style="left:224.5px;top:212.94px;font-size:13px;line-height:13px;color:#e38e9b;font-family:'Liberation Mono',monospace;letter-spacing:0.1px;">)</div>
<div class="t" style="left:232.4px;top:212.94px;font-size:13px;line-height:13px;color:#c9c9c9;font-family:'Liberation Mono',monospace;letter-spacing:0.1px;">¬</div>
<div class="t" style="left:40.0px;top:436.09px;font-size:11px;line-height:11px;color:#555;letter-spacing:0.454px;">4:1</div>
<div class="t" style="left:82.7px;top:436.09px;font-size:11px;line-height:11px;color:#666;letter-spacing:0.706px;">(Top Level) :</div>
<div class="t" style="left:722.0px;top:435.69px;font-size:11px;line-height:11px;color:#444;letter-spacing:0.497px;">R Script</div>
<div class="t" style="left:30.1px;top:461.54px;font-size:12px;line-height:12px;color:#111;font-weight:bold;letter-spacing:0.077px;">Console</div>
<div class="t" style="left:98.3px;top:461.54px;font-size:12px;line-height:12px;color:#111;font-weight:bold;letter-spacing:0.196px;">Terminal</div>
<div class="t" style="left:183.0px;top:461.54px;font-size:12px;line-height:12px;color:#111;font-weight:bold;letter-spacing:0.025px;">Background Jobs</div>
<div class="t" style="left:58.3px;top:484.24px;font-size:12px;line-height:12px;color:#333;letter-spacing:0.946px;">R 4.2.2 · ~/</div>
<div class="t" style="left:27.5px;top:507.04px;font-size:13px;line-height:13px;color:#2f2fe6;font-family:'Liberation Mono',monospace;letter-spacing:0.1px;">&gt; print("Hello World!")</div>
<div class="t" style="left:27.5px;top:527.24px;font-size:13px;line-height:13px;color:#333;font-family:'Liberation Mono',monospace;letter-spacing:0.1px;">[1] "Hello World!"</div>
<div class="t" style="left:27.5px;top:546.84px;font-size:13px;line-height:13px;color:#2f2fe6;font-family:'Liberation Mono',monospace;">&gt;</div>
<div class="t" style="left:799.4px;top:128.04px;font-size:12px;line-height:12px;color:#111;font-weight:bold;letter-spacing:0.506px;">Environment</div>
<div class="t" style="left:897.2px;top:128.04px;font-size:12px;line-height:12px;color:#111;font-weight:bold;letter-spacing:0.443px;">History</div>
<div class="t" style="left:960.6px;top:128.04px;font-size:12px;line-height:12px;color:#111;font-weight:bold;letter-spacing:0.243px;">Connections</div>
<div class="t" style="left:1055.1px;top:128.04px;font-size:12px;line-height:12px;color:#111;font-weight:bold;letter-spacing:0.528px;">Tutorial</div>
<div class="t" style="left:873.0px;top:151.84px;font-size:12px;line-height:12px;color:#333;letter-spacing:0.269px;">Import Dataset</div>
<div class="t" style="left:1000.4px;top:151.84px;font-size:12px;line-height:12px;color:#333;letter-spacing:0.030px;">149 MiB</div>
<div class="t" style="left:1331.6px;top:151.84px;font-size:12px;line-height:12px;color:#333;letter-spacing:-0.025px;">List</div>
<div class="t" style="left:798.0px;top:173.64px;font-size:12px;line-height:12px;color:#333;">R</div>
<div class="t" style="left:854.8px;top:173.64px;font-size:12px;line-height:12px;color:#333;letter-spacing:0.136px;">Global Environment</div>
<div class="t" style="left:795.6px;top:198.24px;font-size:13px;line-height:13px;color:#222;font-family:'Liberation Mono',monospace;letter-spacing:-0.082px;">Values</div>
<div class="t" style="left:812.0px;top:221.04px;font-size:13px;line-height:13px;color:#222;font-family:'Liberation Mono',monospace;letter-spacing:0.029px;">.Last.value</div>
<div class="t" style="left:972.3px;top:221.04px;font-size:13px;line-height:13px;color:#222;font-family:'Liberation Mono',monospace;letter-spacing:-0.040px;">"Hello World!"</div>
<div class="t" style="left:795.6px;top:243.74px;font-size:13px;line-height:13px;color:#222;font-family:'Liberation Mono',monospace;letter-spacing:0.061px;">Functions</div>
<div class="t" style="left:812.0px;top:266.74px;font-size:13px;line-height:13px;color:#222;font-family:'Liberation Mono',monospace;letter-spacing:-0.102px;">alert</div>
<div class="t" style="left:972.3px;top:266.74px;font-size:13px;line-height:13px;color:#222;font-family:'Liberation Mono',monospace;letter-spacing:-0.031px;">function ()</div>
<div class="t" style="left:799.7px;top:554.84px;font-size:12px;line-height:12px;color:#111;font-weight:bold;letter-spacing:0.289px;">Files</div>
<div class="t" style="left:847.3px;top:554.84px;font-size:12px;line-height:12px;color:#111;font-weight:bold;letter-spacing:0.241px;">Plots</div>
<div class="t" style="left:897.2px;top:554.84px;font-size:12px;line-height:12px;color:#111;font-weight:bold;letter-spacing:0.232px;">Packages</div>
<div class="t" style="left:974.3px;top:554.84px;font-size:12px;line-height:12px;color:#111;font-weight:bold;letter-spacing:0.532px;">Help</div>
<div class="t" style="left:1021.0px;top:554.84px;font-size:12px;line-height:12px;color:#111;font-weight:bold;letter-spacing:0.765px;">Viewer</div>
<div class="t" style="left:1082.5px;top:554.84px;font-size:12px;line-height:12px;color:#111;font-weight:bold;letter-spacing:0.556px;">Presentation</div>
<div class="t" style="left:818.4px;top:577.84px;font-size:12px;line-height:12px;color:#333;letter-spacing:-0.039px;">New Folder</div>
<div class="t" style="left:917.3px;top:577.84px;font-size:12px;line-height:12px;color:#333;letter-spacing:-0.064px;">New Blank File</div>
<div class="t" style="left:1045.5px;top:577.84px;font-size:12px;line-height:12px;color:#333;letter-spacing:0.183px;">Delete</div>
<div class="t" style="left:1113.6px;top:577.84px;font-size:12px;line-height:12px;color:#333;letter-spacing:-0.251px;">Rename</div>
<div class="t" style="left:1196.9px;top:577.84px;font-size:12px;line-height:12px;color:#333;letter-spacing:-0.213px;">More</div>
<div class="t" style="left:839.3px;top:599.34px;font-size:12px;line-height:12px;color:#2762c9;letter-spacing:-0.103px;">Home</div>
<div class="t" style="left:865.0px;top:618.24px;font-size:12px;line-height:12px;color:#555;letter-spacing:-0.003px;">Name</div>
<div class="t" style="left:1169.6px;top:618.24px;font-size:12px;line-height:12px;color:#666;letter-spacing:-0.315px;">Size</div>
<div class="t" style="left:1249.2px;top:618.24px;font-size:12px;line-height:12px;color:#666;letter-spacing:0.163px;">Modified</div>
<div class="t" style="left:849.1px;top:639.22px;font-size:12.5px;line-height:12.5px;color:#2a30b6;letter-spacing:0.578px;">Zotero</div>
<div class="t" style="left:849.1px;top:661.97px;font-size:12.5px;line-height:12.5px;color:#2a30b6;letter-spacing:0.556px;">winehq.key</div>
<div class="t" style="left:1177.4px;top:661.97px;font-size:12.5px;line-height:12.5px;color:#333;letter-spacing:0.150px;">3.1 KB</div>
<div class="t" style="left:1257.0px;top:661.97px;font-size:12.5px;line-height:12.5px;color:#333;letter-spacing:0.409px;">Dec 19, 2018, 8:07 AM</div>
<div class="t" style="left:849.1px;top:684.72px;font-size:12.5px;line-height:12.5px;color:#2a30b6;letter-spacing:1.019px;">Web</div>
<div class="t" style="left:849.1px;top:707.47px;font-size:12.5px;line-height:12.5px;color:#2a30b6;letter-spacing:0.723px;">snap</div>
<div class="t" style="left:849.1px;top:730.22px;font-size:12.5px;line-height:12.5px;color:#2a30b6;letter-spacing:0.478px;">signal-desktop-keyring.gpg</div>
<div class="t" style="left:1177.4px;top:730.22px;font-size:12.5px;line-height:12.5px;color:#333;letter-spacing:0.150px;">2.2 KB</div>
<div class="t" style="left:1257.0px;top:730.22px;font-size:12.5px;line-height:12.5px;color:#333;letter-spacing:0.409px;">Nov 16, 2022, 2:37 PM</div>
<div class="t" style="left:849.1px;top:752.97px;font-size:12.5px;line-height:12.5px;color:#2a30b6;letter-spacing:0.500px;">rstudio</div>
<div class="t" style="left:1177.4px;top:752.97px;font-size:12.5px;line-height:12.5px;color:#333;letter-spacing:0.188px;">0 B</div>
<div class="t" style="left:1257.0px;top:752.97px;font-size:12.5px;line-height:12.5px;color:#333;letter-spacing:0.400px;">Jan 9, 2023, 9:57 AM</div>
<div class="t" style="left:849.1px;top:775.72px;font-size:12.5px;line-height:12.5px;color:#2a30b6;letter-spacing:0.516px;">Projects</div>
<div class="t" style="left:849.1px;top:798.47px;font-size:12.5px;line-height:12.5px;color:#2a30b6;letter-spacing:1.000px;">PDF</div>
<div class="t" style="left:849.1px;top:821.22px;font-size:12.5px;line-height:12.5px;color:#2a30b6;letter-spacing:0.556px;">Nextcloud</div>
<div class="t" style="left:849.1px;top:843.97px;font-size:12.5px;line-height:12.5px;color:#2a30b6;letter-spacing:0.645px;">models</div>
<div class="t" style="left:849.1px;top:866.72px;font-size:12.5px;line-height:12.5px;color:#2a30b6;letter-spacing:0.463px;">localhost.pfx</div>
<div class="t" style="left:1177.4px;top:866.72px;font-size:12.5px;line-height:12.5px;color:#333;letter-spacing:0.150px;">2.3 KB</div>
<div class="t" style="left:1257.0px;top:866.72px;font-size:12.5px;line-height:12.5px;color:#333;letter-spacing:0.409px;">Dec 15, 2021, 2:10 PM</div>
<div class="t" style="left:849.1px;top:889.47px;font-size:12.5px;line-height:12.5px;color:#2a30b6;letter-spacing:0.482px;">localhost.key</div>
<div class="t" style="left:1177.4px;top:889.47px;font-size:12.5px;line-height:12.5px;color:#333;letter-spacing:0.150px;">1.8 KB</div>
<div class="t" style="left:1257.0px;top:889.47px;font-size:12.5px;line-height:12.5px;color:#333;letter-spacing:0.409px;">Dec 15, 2021, 2:10 PM</div>
<div class="t" style="left:849.1px;top:912.22px;font-size:12.5px;line-height:12.5px;color:#2a30b6;letter-spacing:0.468px;">localhost.cer</div>
<div class="t" style="left:1177.4px;top:912.22px;font-size:12.5px;line-height:12.5px;color:#333;letter-spacing:0.150px;">1.1 KB</div>
<div class="t" style="left:1257.0px;top:912.22px;font-size:12.5px;line-height:12.5px;color:#333;letter-spacing:0.409px;">Dec 15, 2021, 2:10 PM</div>
<svg style="left:0;top:0" width="1426" height="957" viewBox="0 0 1426 957"><rect x="803.4" y="212.20000000000002" width="347.0999999999999" height="28.999999999999993" rx="2" fill="none" stroke="#e67700" stroke-width="3.6"/><rect x="23.2" y="474.1" width="134.7" height="26.9" rx="2" fill="none" stroke="#2b8a3e" stroke-width="3.6"/><rect x="16.0" y="501.5" width="219.50000000000003" height="23.499999999999964" rx="2" fill="none" stroke="#364fc7" stroke-width="3.6"/><rect x="16.0" y="524.8" width="162.20000000000002" height="20.299999999999976" rx="2" fill="none" stroke="#0b7285" stroke-width="3.6"/><rect x="16.0" y="546.3" width="26.999999999999996" height="15.699999999999955" rx="2" fill="none" stroke="#862e9c" stroke-width="3.6"/><path d="M209.2 457.6L162.4 489.3M179.6 466.3L162.4 489.3L190.2 481.8" fill="none" stroke="#2b8a3e" stroke-width="3.6" stroke-linecap="round" stroke-linejoin="round"/><path d="M 84.30 448.80 L 102.90 422.54 C 103.42 431.29 103.21 440.56 103.42 448.80 M 90.50 441.59 L 106.52 441.07 M 110.66 435.41 L 110.66 448.80 M 110.66 440.56 C 112.72 435.41 123.06 432.32 123.06 441.59 L 123.58 448.80 M 135.98 434.38 C 128.74 434.38 125.64 444.68 130.81 447.77 C 135.98 450.86 144.25 446.74 143.22 439.53 C 142.18 434.38 138.05 433.87 133.91 435.41 M 153.03 427.17 L 152.52 444.68 C 152.52 448.80 156.14 448.80 160.27 446.74 M 146.83 435.41 L 160.27 434.38 M 164.92 426.14 L 164.92 448.80 M 164.92 441.59 C 166.99 435.41 178.36 432.32 178.36 440.56 L 178.87 448.80 M 183.01 442.62 C 188.18 442.62 196.45 441.59 195.41 437.47 C 193.34 432.32 183.01 434.38 182.49 441.59 C 181.98 448.80 192.31 449.83 197.48 446.74 M 202.13 435.41 L 202.13 448.80 M 202.13 441.59 C 204.20 436.44 208.33 434.38 213.50 435.41 M 250.70 436.44 C 247.38 433.35 238.52 433.35 238.52 438.50 C 238.52 442.62 251.81 440.56 251.81 445.71 C 251.81 449.83 240.73 449.83 236.85 446.74 M 257.35 435.41 L 257.35 448.80 M 257.35 428.20 L 257.46 428.72 M 277.30 437.47 C 273.97 433.35 264.00 433.35 262.89 440.56 C 261.79 447.77 270.65 448.80 276.19 444.68 M 277.85 435.41 L 271.76 462.19 M 283.39 435.41 L 283.39 448.80 M 283.39 440.56 C 285.61 435.41 296.69 432.32 296.69 441.59 L 297.24 448.80 M 317.19 437.47 C 313.87 433.35 303.89 433.35 301.68 440.56 C 299.46 447.77 309.43 449.83 316.08 444.68 M 317.19 435.41 L 317.74 448.80 M 323.84 424.60 L 323.84 448.80 M 350.20 435.41 L 357.71 445.71 M 366.29 434.38 L 355.56 461.16 M 379.71 434.38 C 372.20 434.38 368.98 444.68 374.34 447.77 C 379.71 450.86 388.29 446.74 387.22 439.53 C 386.14 434.38 381.85 433.87 377.56 435.41 M 392.04 435.41 L 392.04 443.65 C 392.04 449.83 403.85 449.83 404.92 442.62 M 404.92 435.41 L 405.46 448.80 M 411.36 426.14 L 409.21 433.35 M 415.65 435.41 L 415.65 448.80 M 415.65 441.59 C 417.79 436.44 422.09 434.38 427.45 435.41 M 431.21 442.62 C 436.57 442.62 445.15 441.59 444.08 437.47 C 441.94 432.32 431.21 434.38 430.67 441.59 C 430.13 448.80 440.86 449.83 446.23 446.74 M 471.08 435.41 L 471.08 443.65 C 471.08 449.83 482.92 449.83 483.99 442.62 M 483.99 435.41 L 484.53 448.80 M 501.75 436.44 C 498.52 433.35 489.91 433.35 489.91 438.50 C 489.91 442.62 502.83 440.56 502.83 445.71 C 502.83 449.83 492.07 449.83 488.30 446.74 M 508.21 435.41 L 508.21 448.80 M 508.21 428.20 L 508.32 428.72 M 513.59 435.41 L 513.59 448.80 M 513.59 440.56 C 515.75 435.41 526.51 432.32 526.51 441.59 L 527.05 448.80 M 545.35 437.47 C 542.12 433.35 532.43 433.35 531.35 440.56 C 530.28 447.77 538.89 448.80 544.27 444.68 M 545.89 435.41 L 539.97 462.19 M 569.37 428.20 L 569.37 448.80 M 568.79 425.11 C 579.94 425.11 591.09 428.20 589.91 433.35 C 588.74 437.47 579.94 437.99 574.66 436.44 M 574.66 436.44 L 589.33 448.29" fill="none" stroke="#2b8a3e" stroke-width="3.9" stroke-linecap="round" stroke-linejoin="round"/><path d="M 247.00 501.60 L 277.51 499.00 M 261.24 500.56 L 261.75 522.40 M 281.07 499.52 L 281.07 522.40 M 281.07 515.12 C 283.10 508.88 294.29 505.76 294.29 514.08 L 294.80 522.40 M 299.38 508.88 L 299.38 522.40 M 299.38 501.60 L 299.48 502.12 M 316.67 509.92 C 313.61 506.80 305.48 506.80 305.48 512.00 C 305.48 516.16 317.68 514.08 317.68 519.28 C 317.68 523.44 307.51 523.44 303.95 520.32 M 342.61 508.88 L 342.61 522.40 M 342.61 501.60 L 342.73 502.12 M 362.02 509.92 C 358.59 506.80 349.46 506.80 349.46 512.00 C 349.46 516.16 363.16 514.08 363.16 519.28 C 363.16 523.44 351.74 523.44 347.75 520.32 M 391.36 500.56 L 390.79 518.24 C 390.79 522.40 394.73 522.40 399.24 520.32 M 384.60 508.88 L 399.24 507.84 M 404.31 499.52 L 404.31 522.40 M 404.31 515.12 C 406.56 508.88 418.94 505.76 418.94 514.08 L 419.51 522.40 M 424.01 516.16 C 429.64 516.16 438.65 515.12 437.52 510.96 C 435.27 505.76 424.01 507.84 423.45 515.12 C 422.88 522.40 434.14 523.44 439.77 520.32 M 475.30 510.96 C 472.25 506.80 463.12 507.84 462.61 516.16 C 462.61 522.40 471.24 523.44 476.31 520.32 M 487.99 507.84 C 480.88 507.84 477.83 518.24 482.91 521.36 C 487.99 524.48 496.11 520.32 495.09 513.04 C 494.08 507.84 490.02 507.32 485.96 508.88 M 499.66 508.88 L 499.66 522.40 M 499.66 514.08 C 500.67 508.88 509.81 506.80 509.81 515.12 L 509.81 522.40 M 509.81 514.08 C 510.83 508.88 519.96 506.80 519.96 515.12 L 520.47 522.40 M 524.53 508.88 L 524.53 522.40 M 524.53 514.08 C 525.54 508.88 534.68 506.80 534.68 515.12 L 534.68 522.40 M 534.68 514.08 C 535.70 508.88 544.83 506.80 544.83 515.12 L 545.34 522.40 M 563.61 510.96 C 560.57 506.80 551.43 506.80 549.40 514.08 C 547.37 521.36 556.51 523.44 562.60 518.24 M 563.61 508.88 L 564.12 522.40 M 569.19 508.88 L 569.19 522.40 M 569.19 514.08 C 571.22 508.88 581.38 505.76 581.38 515.12 L 581.88 522.40 M 600.15 512.00 C 597.11 506.80 587.97 506.80 585.94 514.08 C 583.91 521.36 593.05 523.44 599.14 518.24 M 601.17 498.48 L 601.68 522.40 M 624.50 508.88 L 631.70 519.28 M 639.93 507.84 L 629.64 534.88 M 652.79 507.84 C 645.59 507.84 642.50 518.24 647.65 521.36 C 652.79 524.48 661.02 520.32 660.00 513.04 C 658.97 507.84 654.85 507.32 650.74 508.88 M 664.62 508.88 L 664.62 517.20 C 664.62 523.44 675.94 523.44 676.97 516.16 M 676.97 508.88 L 677.49 522.40 M 701.40 508.88 L 701.40 522.40 M 701.40 515.12 C 703.61 509.92 708.03 507.84 713.55 508.88 M 732.87 510.96 C 729.56 506.80 719.62 506.80 717.41 514.08 C 715.21 521.36 725.14 523.44 731.77 518.24 M 732.87 508.88 L 733.42 522.40 M 738.95 508.88 L 738.95 522.40 M 738.95 514.08 C 741.15 508.88 752.20 505.76 752.20 515.12 L 752.75 522.40" fill="none" stroke="#364fc7" stroke-width="3.5" stroke-linecap="round" stroke-linejoin="round"/><path d="M 191.20 531.20 L 219.88 528.60 M 204.58 530.16 L 205.06 552.00 M 223.23 529.12 L 223.23 552.00 M 223.23 544.72 C 225.14 538.48 235.66 535.36 235.66 543.68 L 236.13 552.00 M 240.44 538.48 L 240.44 552.00 M 240.44 531.20 L 240.53 531.72 M 256.69 539.52 C 253.82 536.40 246.17 536.40 246.17 541.60 C 246.17 545.76 257.64 543.68 257.64 548.88 C 257.64 553.04 248.08 553.04 244.74 549.92 M 283.15 538.48 L 283.15 552.00 M 283.15 531.20 L 283.26 531.72 M 301.90 539.52 C 298.59 536.40 289.77 536.40 289.77 541.60 C 289.77 545.76 303.00 543.68 303.00 548.88 C 303.00 553.04 291.97 553.04 288.11 549.92 M 328.37 531.20 L 328.37 552.00 M 327.79 528.08 C 338.91 528.08 350.04 531.20 348.87 536.40 C 347.70 540.56 338.91 541.08 333.64 539.52 M 333.64 539.52 L 348.29 551.48 M 355.31 529.12 L 352.97 536.40 M 374.06 539.52 C 370.54 536.40 361.17 536.40 361.17 541.60 C 361.17 545.76 375.23 543.68 375.23 548.88 C 375.23 553.04 363.51 553.04 359.41 549.92 M 400.04 538.48 L 400.04 552.00 M 400.04 544.72 C 402.12 539.52 406.27 537.44 411.47 538.48 M 415.10 545.76 C 420.30 545.76 428.61 544.72 427.57 540.56 C 425.49 535.36 415.10 537.44 414.58 544.72 C 414.07 552.00 424.46 553.04 429.65 549.92 M 446.79 539.52 C 443.68 536.40 435.36 536.40 435.36 541.60 C 435.36 545.76 447.83 543.68 447.83 548.88 C 447.83 553.04 437.44 553.04 433.81 549.92 M 452.51 538.48 L 453.03 564.48 M 452.51 542.64 C 454.59 536.40 467.05 536.40 467.05 544.72 C 467.05 552.00 457.70 553.04 453.03 548.88 M 480.04 537.44 C 472.77 537.44 469.65 547.84 474.85 550.96 C 480.04 554.08 488.35 549.92 487.31 542.64 C 486.28 537.44 482.12 536.92 477.96 538.48 M 491.99 538.48 L 491.99 552.00 M 491.99 543.68 C 494.07 538.48 504.46 535.36 504.46 544.72 L 504.98 552.00 M 521.60 539.52 C 518.48 536.40 510.17 536.40 510.17 541.60 C 510.17 545.76 522.64 543.68 522.64 548.88 C 522.64 553.04 512.25 553.04 508.61 549.92 M 527.32 545.76 C 532.51 545.76 540.82 544.72 539.78 540.56 C 537.71 535.36 527.32 537.44 526.80 544.72 C 526.28 552.00 536.67 553.04 541.86 549.92" fill="none" stroke="#0b7285" stroke-width="3.5" stroke-linecap="round" stroke-linejoin="round"/><path d="M 21.50 573.70 L 32.90 583.06 L 21.91 593.46 M 61.80 572.66 L 61.20 590.34 C 61.20 594.50 65.40 594.50 70.20 592.42 M 54.60 580.98 L 70.20 579.94 M 75.60 588.26 C 81.60 588.26 91.20 587.22 90.00 583.06 C 87.60 577.86 75.60 579.94 75.00 587.22 C 74.40 594.50 86.40 595.54 92.40 592.42 M 98.40 570.06 L 98.40 594.50 M 105.00 570.06 L 105.00 594.50 M 125.40 582.02 C 121.80 578.90 112.20 578.90 112.20 584.10 C 112.20 588.26 126.60 586.18 126.60 591.38 C 126.60 595.54 114.60 595.54 110.40 592.42 M 149.50 580.98 L 156.84 591.38 M 165.22 579.94 L 154.74 606.98 M 178.32 579.94 C 170.99 579.94 167.84 590.34 173.08 593.46 C 178.32 596.58 186.71 592.42 185.66 585.14 C 184.61 579.94 180.42 579.42 176.23 580.98 M 190.38 580.98 L 190.38 589.30 C 190.38 595.54 201.90 595.54 202.95 588.26 M 202.95 580.98 L 203.48 594.50 M 225.70 580.98 L 233.37 591.38 M 242.13 579.94 L 231.18 606.98 M 255.81 579.94 C 248.15 579.94 244.86 590.34 250.34 593.46 C 255.81 596.58 264.57 592.42 263.48 585.14 C 262.38 579.94 258.00 579.42 253.62 580.98 M 268.41 580.98 L 268.41 589.30 C 268.41 595.54 280.45 595.54 281.55 588.26 M 281.55 580.98 L 282.09 594.50 M 288.12 571.62 L 285.93 578.90 M 292.50 580.98 L 292.50 594.50 M 292.50 587.22 C 294.69 582.02 299.07 579.94 304.54 580.98 M 308.37 588.26 C 313.85 588.26 322.61 587.22 321.51 583.06 C 319.32 577.86 308.37 579.94 307.83 587.22 C 307.28 594.50 318.23 595.54 323.70 592.42 M 346.54 580.98 L 346.54 594.50 M 346.54 573.70 L 346.64 574.22 M 351.67 580.98 L 351.67 594.50 M 351.67 586.18 C 353.72 580.98 363.97 577.86 363.97 587.22 L 364.49 594.50 M 386.51 573.70 L 386.51 594.50 M 385.90 570.58 C 397.35 570.58 408.80 573.70 407.60 578.90 C 406.39 583.06 397.35 583.58 391.93 582.02 M 391.93 582.02 L 406.99 593.98" fill="none" stroke="#862e9c" stroke-width="3.5" stroke-linecap="round" stroke-linejoin="round"/><path d="M 805.50 295.80 L 836.14 293.30 M 819.80 294.80 L 820.31 315.80 M 839.71 293.80 L 839.71 315.80 M 839.71 308.80 C 841.76 302.80 852.99 299.80 852.99 307.80 L 853.50 315.80 M 858.10 302.80 L 858.10 315.80 M 858.10 295.80 L 858.20 296.30 M 875.46 303.80 C 872.39 300.80 864.22 300.80 864.22 305.80 C 864.22 309.80 876.48 307.80 876.48 312.80 C 876.48 316.80 866.27 316.80 862.69 313.80 M 901.16 302.80 L 901.16 315.80 M 901.16 307.80 C 902.13 302.80 910.80 300.80 910.80 308.80 L 910.80 315.80 M 910.80 307.80 C 911.76 302.80 920.43 300.80 920.43 308.80 L 920.91 315.80 M 938.25 304.80 C 935.36 300.80 926.69 300.80 924.76 307.80 C 922.84 314.80 931.51 316.80 937.29 311.80 M 938.25 302.80 L 938.73 315.80 M 942.59 302.80 L 949.33 312.80 M 957.04 301.80 L 947.40 327.80 M 996.70 304.80 C 993.46 300.80 983.74 300.80 981.58 307.80 C 979.42 314.80 989.14 316.80 995.62 311.80 M 996.70 302.80 L 997.24 315.80 M 1002.64 302.80 L 1003.18 327.80 M 1002.64 306.80 C 1004.80 300.80 1017.75 300.80 1017.75 308.80 C 1017.75 315.80 1008.04 316.80 1003.18 312.80 M 1022.61 302.80 L 1023.15 327.80 M 1022.61 306.80 C 1024.77 300.80 1037.73 300.80 1037.73 308.80 C 1037.73 315.80 1028.01 316.80 1023.15 312.80 M 1042.59 309.80 C 1047.99 309.80 1056.63 308.80 1055.55 304.80 C 1053.39 299.80 1042.59 301.80 1042.05 308.80 C 1041.51 315.80 1052.31 316.80 1057.71 313.80 M 1077.68 304.80 C 1074.44 300.80 1064.73 300.80 1062.57 307.80 C 1060.41 314.80 1070.12 316.80 1076.60 311.80 M 1077.68 302.80 L 1078.22 315.80 M 1083.62 302.80 L 1083.62 315.80 M 1083.62 308.80 C 1085.78 303.80 1090.10 301.80 1095.50 302.80 M 1119.88 302.80 L 1119.88 315.80 M 1119.88 295.80 L 1119.98 296.30 M 1124.50 302.80 L 1124.50 315.80 M 1124.50 307.80 C 1126.35 302.80 1135.58 299.80 1135.58 308.80 L 1136.04 315.80 M 1164.46 294.80 L 1163.88 311.80 C 1163.88 315.80 1167.94 315.80 1172.58 313.80 M 1157.50 302.80 L 1172.58 301.80 M 1177.80 293.80 L 1177.80 315.80 M 1177.80 308.80 C 1180.12 302.80 1192.88 299.80 1192.88 307.80 L 1193.46 315.80 M 1198.10 309.80 C 1203.90 309.80 1213.18 308.80 1212.02 304.80 C 1209.70 299.80 1198.10 301.80 1197.52 308.80 C 1196.94 315.80 1208.54 316.80 1214.34 313.80" fill="none" stroke="#e67700" stroke-width="3.4" stroke-linecap="round" stroke-linejoin="round"/><path d="M 808.14 356.30 C 813.34 356.30 821.66 355.30 820.62 351.30 C 818.54 346.30 808.14 348.30 807.62 355.30 C 807.10 362.30 817.50 363.30 822.70 360.30 M 827.38 349.30 L 827.38 362.30 M 827.38 354.30 C 829.46 349.30 839.85 346.30 839.85 355.30 L 840.37 362.30 M 843.49 349.30 L 850.25 362.30 L 858.05 348.30 M 862.21 349.30 L 862.21 362.30 M 862.21 342.30 L 862.31 342.80 M 867.41 349.30 L 867.41 362.30 M 867.41 355.30 C 869.49 350.30 873.65 348.30 878.84 349.30 M 890.80 348.30 C 883.52 348.30 880.40 358.30 885.60 361.30 C 890.80 364.30 899.12 360.30 898.08 353.30 C 897.04 348.30 892.88 347.80 888.72 349.30 M 902.76 349.30 L 902.76 362.30 M 902.76 354.30 C 904.84 349.30 915.24 346.30 915.24 355.30 L 915.76 362.30 M 919.92 349.30 L 919.92 362.30 M 919.92 354.30 C 920.96 349.30 930.31 347.30 930.31 355.30 L 930.31 362.30 M 930.31 354.30 C 931.35 349.30 940.71 347.30 940.71 355.30 L 941.23 362.30 M 945.39 356.30 C 950.59 356.30 958.91 355.30 957.87 351.30 C 955.79 346.30 945.39 348.30 944.87 355.30 C 944.35 362.30 954.75 363.30 959.95 360.30 M 964.63 349.30 L 964.63 362.30 M 964.63 354.30 C 966.71 349.30 977.10 346.30 977.10 355.30 L 977.62 362.30 M 986.98 341.30 L 986.46 358.30 C 986.46 362.30 990.10 362.30 994.26 360.30 M 980.74 349.30 L 994.26 348.30 M 1020.56 349.30 L 1021.10 374.30 M 1020.56 353.30 C 1022.69 347.30 1035.46 347.30 1035.46 355.30 C 1035.46 362.30 1025.88 363.30 1021.10 359.30 M 1055.14 351.30 C 1051.95 347.30 1042.37 347.30 1040.24 354.30 C 1038.12 361.30 1047.69 363.30 1054.07 358.30 M 1055.14 349.30 L 1055.67 362.30 M 1060.99 349.30 L 1060.99 362.30 M 1060.99 354.30 C 1063.12 349.30 1073.76 346.30 1073.76 355.30 L 1074.29 362.30 M 1078.54 356.30 C 1083.86 356.30 1092.37 355.30 1091.31 351.30 C 1089.18 346.30 1078.54 348.30 1078.01 355.30 C 1077.48 362.30 1088.12 363.30 1093.44 360.30 M 1117.00 349.30 C 1117.49 358.30 1118.94 362.30 1121.85 362.30 C 1124.76 362.30 1126.70 358.30 1127.19 352.30 C 1127.67 358.30 1129.61 362.30 1132.52 362.30 C 1135.43 362.30 1137.37 358.30 1137.37 348.30 M 1140.77 340.30 L 1140.77 362.30 M 1140.77 355.30 C 1142.71 349.30 1153.38 346.30 1153.38 354.30 L 1153.86 362.30 M 1157.74 356.30 C 1162.59 356.30 1170.35 355.30 1169.38 351.30 C 1167.44 346.30 1157.74 348.30 1157.26 355.30 C 1156.77 362.30 1166.47 363.30 1171.32 360.30 M 1175.69 349.30 L 1175.69 362.30 M 1175.69 354.30 C 1177.63 349.30 1187.33 346.30 1187.33 355.30 L 1187.81 362.30 M 1209.00 349.30 L 1216.23 359.30 M 1224.49 348.30 L 1214.16 374.30 M 1237.40 348.30 C 1230.17 348.30 1227.07 358.30 1232.24 361.30 C 1237.40 364.30 1245.66 360.30 1244.63 353.30 C 1243.60 348.30 1239.46 347.80 1235.33 349.30 M 1249.28 349.30 L 1249.28 357.30 C 1249.28 363.30 1260.63 363.30 1261.67 356.30 M 1261.67 349.30 L 1262.18 362.30" fill="none" stroke="#e67700" stroke-width="3.4" stroke-linecap="round" stroke-linejoin="round"/><path d="M 808.18 392.30 L 808.18 405.30 M 808.18 398.30 C 810.33 393.30 814.63 391.30 820.01 392.30 M 823.77 392.30 L 823.77 400.30 C 823.77 406.30 835.60 406.30 836.68 399.30 M 836.68 392.30 L 837.22 405.30 M 841.52 392.30 L 841.52 405.30 M 841.52 397.30 C 843.67 392.30 854.42 389.30 854.42 398.30 L 854.96 405.30 M 890.98 394.30 C 887.80 390.30 878.26 391.30 877.73 399.30 C 877.73 405.30 886.74 406.30 892.04 403.30 M 904.24 391.30 C 896.81 391.30 893.63 401.30 898.94 404.30 C 904.24 407.30 912.72 403.30 911.66 396.30 C 910.60 391.30 906.36 390.80 902.12 392.30 M 931.27 395.30 C 928.09 390.30 918.55 390.30 916.43 397.30 C 914.31 404.30 923.85 406.30 930.21 401.30 M 932.33 382.30 L 932.86 405.30 M 938.16 399.30 C 943.47 399.30 951.95 398.30 950.89 394.30 C 948.77 389.30 938.16 391.30 937.63 398.30 C 937.10 405.30 947.71 406.30 953.01 403.30 M 958.31 404.30 L 958.42 404.70 M 984.20 383.80 L 999.90 383.30 M 992.05 383.30 L 992.05 405.30 M 984.20 405.80 L 999.90 405.30 M 1009.43 384.30 L 1008.87 401.30 C 1008.87 405.30 1012.79 405.30 1017.28 403.30 M 1002.70 392.30 L 1017.28 391.30 M 1055.46 393.30 C 1052.47 390.30 1044.49 390.30 1044.49 395.30 C 1044.49 399.30 1056.45 397.30 1056.45 402.30 C 1056.45 406.30 1046.49 406.30 1043.00 403.30 M 1060.94 383.30 L 1060.94 405.30 M 1060.94 398.30 C 1062.93 392.30 1073.90 389.30 1073.90 397.30 L 1074.40 405.30 M 1086.36 391.30 C 1079.38 391.30 1076.39 401.30 1081.37 404.30 C 1086.36 407.30 1094.33 403.30 1093.34 396.30 C 1092.34 391.30 1088.35 390.80 1084.36 392.30 M 1096.82 392.30 C 1097.32 401.30 1098.82 405.30 1101.81 405.30 C 1104.80 405.30 1106.79 401.30 1107.29 395.30 C 1107.79 401.30 1109.78 405.30 1112.77 405.30 C 1115.76 405.30 1117.76 401.30 1117.76 391.30 M 1133.21 393.30 C 1130.22 390.30 1122.24 390.30 1122.24 395.30 C 1122.24 399.30 1134.20 397.30 1134.20 402.30 C 1134.20 406.30 1124.24 406.30 1120.75 403.30 M 1157.70 392.30 L 1164.92 402.30 M 1173.16 391.30 L 1162.85 417.30 M 1186.05 391.30 C 1178.83 391.30 1175.74 401.30 1180.89 404.30 C 1186.05 407.30 1194.29 403.30 1193.26 396.30 C 1192.23 391.30 1188.11 390.80 1183.98 392.30 M 1197.90 392.30 L 1197.90 400.30 C 1197.90 406.30 1209.24 406.30 1210.27 399.30 M 1210.27 392.30 L 1210.78 405.30 M 1238.75 384.30 L 1238.19 401.30 C 1238.19 405.30 1242.07 405.30 1246.50 403.30 M 1232.10 392.30 L 1246.50 391.30 M 1251.49 383.30 L 1251.49 405.30 M 1251.49 398.30 C 1253.71 392.30 1265.89 389.30 1265.89 397.30 L 1266.45 405.30 M 1270.88 399.30 C 1276.42 399.30 1285.28 398.30 1284.18 394.30 C 1281.96 389.30 1270.88 391.30 1270.33 398.30 C 1269.77 405.30 1280.85 406.30 1286.39 403.30" fill="none" stroke="#e67700" stroke-width="3.4" stroke-linecap="round" stroke-linejoin="round"/><path d="M 810.65 426.10 L 810.65 449.60 M 832.85 438.60 C 829.34 434.60 818.83 434.60 816.49 441.60 C 814.16 448.60 824.67 450.60 831.68 445.60 M 832.85 436.60 L 833.43 449.60 M 853.29 437.60 C 849.78 434.60 840.44 434.60 840.44 439.60 C 840.44 443.60 854.46 441.60 854.46 446.60 C 854.46 450.60 842.78 450.60 838.69 447.60 M 865.55 428.60 L 864.97 445.60 C 864.97 449.60 869.06 449.60 873.73 447.60 M 858.55 436.60 L 873.73 435.60 M 911.33 438.60 C 908.14 434.60 898.56 435.60 898.03 443.60 C 898.03 449.60 907.08 450.60 912.40 447.60 M 924.63 435.60 C 917.18 435.60 913.99 445.60 919.31 448.60 C 924.63 451.60 933.14 447.60 932.08 440.60 C 931.02 435.60 926.76 435.10 922.50 436.60 M 936.87 436.60 L 936.87 449.60 M 936.87 441.60 C 937.93 436.60 947.51 434.60 947.51 442.60 L 947.51 449.60 M 947.51 441.60 C 948.57 436.60 958.15 434.60 958.15 442.60 L 958.68 449.60 M 962.93 436.60 L 963.47 461.60 M 962.93 440.60 C 965.06 434.60 977.83 434.60 977.83 442.60 C 977.83 449.60 968.25 450.60 963.47 446.60 M 982.62 436.60 L 982.62 444.60 C 982.62 450.60 994.32 450.60 995.39 443.60 M 995.39 436.60 L 995.92 449.60 M 1005.49 428.60 L 1004.96 445.60 C 1004.96 449.60 1008.69 449.60 1012.94 447.60 M 999.11 436.60 L 1012.94 435.60 M 1017.73 443.60 C 1023.05 443.60 1031.56 442.60 1030.50 438.60 C 1028.37 433.60 1017.73 435.60 1017.20 442.60 C 1016.66 449.60 1027.30 450.60 1032.62 447.60 M 1052.31 439.60 C 1049.12 434.60 1039.54 434.60 1037.41 441.60 C 1035.28 448.60 1044.86 450.60 1051.24 445.60 M 1053.37 426.60 L 1053.90 449.60 M 1076.20 436.60 L 1084.07 449.60 L 1093.14 435.60 M 1114.32 438.60 C 1110.69 434.60 1099.80 434.60 1097.38 441.60 C 1094.96 448.60 1105.85 450.60 1113.11 445.60 M 1114.32 436.60 L 1114.92 449.60 M 1121.58 426.10 L 1121.58 449.60 M 1127.63 436.60 L 1127.63 444.60 C 1127.63 450.60 1140.94 450.60 1142.15 443.60 M 1142.15 436.60 L 1142.75 449.60 M 1147.59 443.60 C 1153.64 443.60 1163.32 442.60 1162.11 438.60 C 1159.69 433.60 1147.59 435.60 1146.99 442.60 C 1146.38 449.60 1158.48 450.60 1164.53 447.60 M 1170.58 448.60 L 1170.71 449.00" fill="none" stroke="#e67700" stroke-width="3.4" stroke-linecap="round" stroke-linejoin="round"/></svg>

</body></html>
